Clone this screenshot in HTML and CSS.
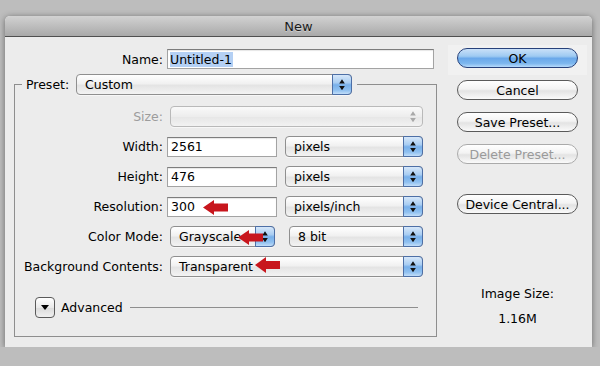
FILE: index.html
```html
<!DOCTYPE html>
<html>
<head>
<meta charset="utf-8">
<title>New</title>
<link rel="stylesheet" href="styles.css">
</head>
<body>
<div class="dialog">
  <div class="titlebar">New</div>
  <div class="body">
    <div class="form">
      <div class="name-row">
        <span class="name-label">Name:</span>
        <div class="field name-field"><span class="selected">Untitled-1</span></div>
      </div>
      <fieldset class="group">
        <legend class="legend">
          <span class="legend-inner">
            <span class="legend-label">Preset:</span>
            <span class="popup preset"><span class="popup-text">Custom</span><span class="stepper"><svg viewBox="0 0 19 21" width="19" height="21"><path d="M6.5 9.5 L9.5 5 L12.5 9.5 Z M6.5 12 L12.5 12 L9.5 16.5 Z" fill="#111"/></svg></span></span>
          </span>
        </legend>
        <div class="rows">
          <div class="row">
            <span class="lbl disabled">Size:</span>
            <span class="popup full is-disabled"><span class="popup-text"></span><span class="stepper plain"><svg viewBox="0 0 19 21" width="19" height="21"><path d="M6.5 9.5 L9.5 5 L12.5 9.5 Z M6.5 12 L12.5 12 L9.5 16.5 Z" fill="#a9a9a9"/></svg></span></span>
          </div>
          <div class="row">
            <span class="lbl">Width:</span>
            <div class="field small">2561</div>
            <span class="popup unit"><span class="popup-text">pixels</span><span class="stepper"><svg viewBox="0 0 19 21" width="19" height="21"><path d="M6.5 9.5 L9.5 5 L12.5 9.5 Z M6.5 12 L12.5 12 L9.5 16.5 Z" fill="#111"/></svg></span></span>
          </div>
          <div class="row">
            <span class="lbl">Height:</span>
            <div class="field small">476</div>
            <span class="popup unit"><span class="popup-text">pixels</span><span class="stepper"><svg viewBox="0 0 19 21" width="19" height="21"><path d="M6.5 9.5 L9.5 5 L12.5 9.5 Z M6.5 12 L12.5 12 L9.5 16.5 Z" fill="#111"/></svg></span></span>
          </div>
          <div class="row">
            <span class="lbl">Resolution:</span>
            <div class="field small has-arrow">300<svg class="arrow arrow-res" viewBox="0 0 25 15" width="25" height="15"><path d="M0 7.5 L11 0 L11 3.5 L25 3.5 L25 11.5 L11 11.5 L11 15 Z" fill="#c8161d"/></svg></div>
            <span class="popup unit"><span class="popup-text">pixels/inch</span><span class="stepper"><svg viewBox="0 0 19 21" width="19" height="21"><path d="M6.5 9.5 L9.5 5 L12.5 9.5 Z M6.5 12 L12.5 12 L9.5 16.5 Z" fill="#111"/></svg></span></span>
          </div>
          <div class="row">
            <span class="lbl">Color Mode:</span>
            <span class="popup mode has-arrow"><span class="popup-text">Grayscale</span><span class="stepper"><svg viewBox="0 0 19 21" width="19" height="21"><path d="M6.5 9.5 L9.5 5 L12.5 9.5 Z M6.5 12 L12.5 12 L9.5 16.5 Z" fill="#111"/></svg></span><svg class="arrow arrow-mode" viewBox="0 0 25 15" width="25" height="15"><path d="M0 7.5 L11 0 L11 3.5 L25 3.5 L25 11.5 L11 11.5 L11 15 Z" fill="#c8161d"/></svg></span>
            <span class="popup bits"><span class="popup-text">8 bit</span><span class="stepper"><svg viewBox="0 0 19 21" width="19" height="21"><path d="M6.5 9.5 L9.5 5 L12.5 9.5 Z M6.5 12 L12.5 12 L9.5 16.5 Z" fill="#111"/></svg></span></span>
          </div>
          <div class="row">
            <span class="lbl">Background Contents:</span>
            <span class="popup full has-arrow"><span class="popup-text">Transparent</span><span class="stepper"><svg viewBox="0 0 19 21" width="19" height="21"><path d="M6.5 9.5 L9.5 5 L12.5 9.5 Z M6.5 12 L12.5 12 L9.5 16.5 Z" fill="#111"/></svg></span><svg class="arrow arrow-bg" viewBox="0 0 25 16" width="25" height="16"><path d="M0 8 L11 0 L11 4 L25 4 L25 12 L11 12 L11 16 Z" fill="#c8161d"/></svg></span>
          </div>
        </div>
        <div class="advanced">
          <span class="disclosure"><svg viewBox="0 0 18 19" width="18" height="19"><path d="M5 7 L13 7 L9 12 Z" fill="#000"/></svg></span>
          <span class="adv-label">Advanced</span>
          <span class="adv-line"></span>
        </div>
      </fieldset>
    </div>
    <div class="actions">
      <div class="default-wrap"><div class="btn btn-default">OK</div></div>
      <div class="btn btn-cancel">Cancel</div>
      <div class="btn btn-gap">Save Preset...</div>
      <div class="btn btn-gap btn-disabled">Delete Preset...</div>
      <div class="btn btn-device">Device Central...</div>
      <div class="info">
        <div class="info-line">Image Size:</div>
        <div class="info-line value">1.16M</div>
      </div>
    </div>
  </div>
</div>
</body>
</html>
```
FILE: styles.css
```css
* { box-sizing: border-box; }

body {
  margin: 0;
  background: #bdbdbd;
  font-family: "DejaVu Sans", "Noto Sans", sans-serif;
  font-size: 12.5px;
  color: #000;
}

.dialog {
  margin: 16px 0 0 5px;
  width: 587px;
  height: 331px;
  background: #ececec;
  border-radius: 5px 5px 0 0;
  box-shadow: 0 1px 6px rgba(0, 0, 0, 0.45);
  display: flex;
  flex-direction: column;
  overflow: hidden;
}

.titlebar {
  height: 21px;
  flex: none;
  border-bottom: 1px solid #505050;
  background: linear-gradient(#d2d2d2, #a9a9a9);
  display: flex;
  align-items: center;
  justify-content: center;
  font-size: 13px;
  color: #1a1a1a;
  text-shadow: 0 1px 0 rgba(255, 255, 255, 0.35);
}

.body {
  display: flex;
  flex: 1;
}

.form {
  width: 443px;
  padding-top: 12px;
}

.name-row {
  display: flex;
  align-items: center;
  height: 20px;
}

.name-label {
  width: 158px;
  margin-right: 4px;
  text-align: right;
}

.field {
  height: 20px;
  background: #fff;
  border: 1px solid #a3a3a3;
  border-top-color: #7d7d7d;
  box-shadow: inset 0 1px 1px rgba(0, 0, 0, 0.1);
  padding: 0 3px;
  display: flex;
  align-items: center;
  flex: none;
}

.name-field { width: 267px; }

.selected {
  background: #b4d0f4;
  padding: 0 1px 0 0;
  margin-left: -1px;
}

.group {
  margin: 5px 0 0 9px;
  width: 423px;
  border: 1px solid #8e8e8e;
  padding: 0 0 18px 0;
  min-width: 0;
}

.legend {
  margin-left: 7px;
  padding: 0 5px 0 4px;
}

.legend-inner {
  display: flex;
  align-items: center;
  height: 21px;
}

.legend-label { width: 50px; }

.popup {
  position: relative;
  height: 21px;
  display: flex;
  align-items: stretch;
  border: 1px solid #8f8f8f;
  border-radius: 4px;
  background: linear-gradient(#ffffff, #f1f1f1 45%, #e4e4e4 55%, #f3f3f3);
  box-shadow: 0 1px 0 rgba(255, 255, 255, 0.6);
  flex: none;
}

.popup-text {
  flex: 1;
  display: flex;
  align-items: center;
  padding-left: 8px;
  white-space: nowrap;
  overflow: hidden;
}

.stepper {
  width: 20px;
  margin: -1px -1px -1px 0;
  border: 1px solid #4d6fa6;
  border-radius: 0 4px 4px 0;
  background: linear-gradient(#d6e7f9, #a9cdf2 40%, #78b0ea 52%, #8fc0f0 80%, #c2def9);
  display: flex;
  align-items: center;
  justify-content: center;
}

.stepper.plain {
  background: transparent;
  border-color: transparent;
}

.popup.is-disabled {
  border-color: #b9b9b9;
  background: linear-gradient(#f9f9f9, #ededed 50%, #e7e7e7 55%, #f2f2f2);
}

.preset { width: 276px; }

.rows {
  margin-top: 11px;
  display: flex;
  flex-direction: column;
  gap: 9px;
}

.row {
  display: flex;
  align-items: center;
  height: 21px;
}

.lbl {
  width: 148px;
  margin-right: 4px;
  text-align: right;
  white-space: nowrap;
}

.lbl.disabled { color: #9c9c9c; }

.full { width: 253px; margin-left: 3px; }

.small { width: 110px; }

.unit { width: 138px; margin-left: 8px; }

.mode { width: 105px; margin-left: 3px; }

.bits { width: 134px; margin-left: 14px; }

.has-arrow { position: relative; }

.arrow { position: absolute; }

.arrow-res { left: 35px; top: 2px; }

.arrow-mode { left: 67px; top: 3px; }

.arrow-bg { left: 84px; top: 0; }

.advanced {
  margin: 20px 0 0 20px;
  display: flex;
  align-items: center;
  height: 21px;
}

.disclosure {
  width: 20px;
  height: 21px;
  border: 1px solid #5a5a5a;
  border-radius: 4px;
  background: linear-gradient(#ffffff, #e9e9e9 50%, #dcdcdc 55%, #f0f0f0);
  display: flex;
  align-items: center;
  justify-content: center;
}

.adv-label { margin-left: 6px; }

.adv-line {
  flex: 1;
  height: 1px;
  background: #8e8e8e;
  margin: 0 18px 0 7px;
}

.actions {
  width: 139px;
  padding-top: 8px;
  display: flex;
  flex-direction: column;
}

.default-wrap {
  background: #f1f1f1;
  padding: 3px 9px 7px;
}

.btn {
  height: 20px;
  border: 1px solid #5a5a5a;
  border-radius: 10px;
  background: linear-gradient(#ffffff, #f3f3f3 45%, #e3e3e3 55%, #fafafa);
  display: flex;
  align-items: center;
  justify-content: center;
  font-size: 12.5px;
  margin: 0 9px;
  white-space: nowrap;
}

.default-wrap .btn { margin: 0; }

.btn-default {
  border-color: #27417a;
  background: linear-gradient(#c9e0f8, #9ecaf2 40%, #6aa8ea 52%, #7db7ee 80%, #b6dafb);
}

.btn-cancel { margin-top: 5px; }

.btn-gap { margin-top: 12px; }

.btn-disabled {
  color: #9a9a9a;
  border-color: #aaaaaa;
}

.btn-device { margin-top: 30px; }

.info {
  margin-top: 72px;
  text-align: center;
}

.info-line { line-height: 15px; }

.info-line.value { margin-top: 10px; }
```
